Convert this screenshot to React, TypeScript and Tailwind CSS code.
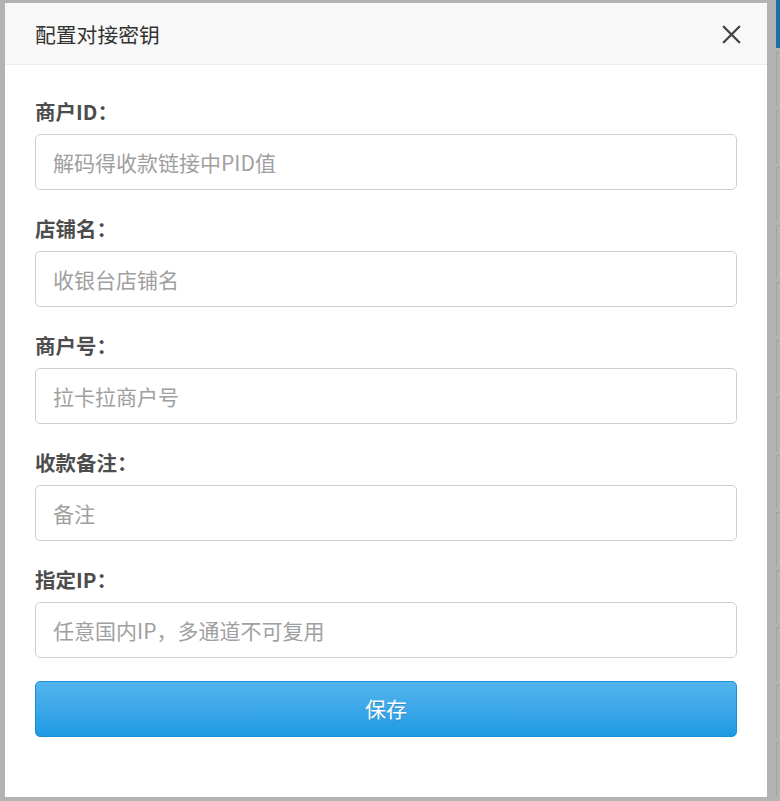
import { X } from "lucide-react";

const fields = [
  { label: "商户ID：", placeholder: "解码得收款链接中PID值" },
  { label: "店铺名：", placeholder: "收银台店铺名" },
  { label: "商户号：", placeholder: "拉卡拉商户号" },
  { label: "收款备注：", placeholder: "备注" },
  { label: "指定IP：", placeholder: "任意国内IP，多通道不可复用" },
];

const font = { fontFamily: '"Noto Sans CJK SC", "Noto Sans", sans-serif' };

function BackgroundPage() {
  // the page under the dimmed overlay, only its right edge shows
  return (
    <div className="flex h-full justify-end">
      <div className="flex w-[4px] flex-col">
        <div className="h-[48px] bg-[#1f6fa6]" />
        {Array.from({ length: 13 }).map((_, i) => (
          <div
            key={i}
            className="mt-[4px] h-[53.5px] border-t border-l border-[#a3a3a3]"
          />
        ))}
      </div>
    </div>
  );
}

export default function App() {
  return (
    <div className="relative h-[801px] w-[780px] overflow-hidden bg-[#b3b3b3]" style={font}>
      <BackgroundPage />
      <div className="absolute inset-0 pl-[5px] pt-[3px]">
        <div className="flex h-[794px] w-[762px] flex-col bg-white">
          <div className="flex h-[62px] items-center justify-between border-b border-[#ececec] bg-[#f8f8f8] pl-[30px] pr-[20px] pt-[2px]">
            <span className="text-[20.8px] text-[#333]">配置对接密钥</span>
            <X className="h-[31px] w-[31px] text-[#444]" strokeWidth={1.8} />
          </div>
          <div className="flex flex-col px-[30px] pt-[34px]">
            {fields.map((f, i) => (
              <div key={f.label} className={i < fields.length - 1 ? "mb-[26px]" : ""}>
                <div className="mb-[11px] h-[24px] text-[20.5px] leading-[24px] font-bold text-[#4d4d4d]">
                  {f.label}
                </div>
                <input
                  className="h-[56px] w-full rounded-[5px] border border-[#cfcfcf] px-[17px] text-[21px] text-[#333] outline-none placeholder:text-[#a0a0a0]"
                  style={font}
                  placeholder={f.placeholder}
                />
              </div>
            ))}
            <button
              className="mt-[23px] h-[56px] w-full rounded-[5px] border border-[#1b8fd8] bg-gradient-to-b from-[#53b5ed] to-[#1c9ae3] text-[21px] text-white [text-shadow:0_1px_1px_rgba(0,0,0,0.15)]"
              style={font}
            >
              保存
            </button>
          </div>
        </div>
      </div>
    </div>
  );
}
